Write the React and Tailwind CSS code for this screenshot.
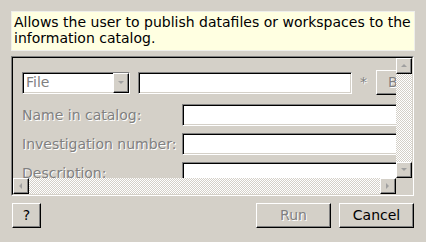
import React from "react";

const font = { fontFamily: '"DejaVu Sans", sans-serif' };

function Sunken({ className = "", children }) {
  return (
    <div
      className={
        "border border-t-[#808080] border-l-[#808080] border-b-white border-r-white shadow-[inset_1px_1px_0_#000,inset_-1px_-1px_0_#d4d0c8] " +
        className
      }
    >
      {children}
    </div>
  );
}

function Raised({ className = "", children }) {
  return (
    <div
      className={
        "border border-t-white border-l-white border-b-black border-r-black shadow-[inset_-1px_-1px_0_#808080] bg-[#d4d0c8] flex items-center justify-center " +
        className
      }
    >
      {children}
    </div>
  );
}

function Tri({ dir }) {
  const pts = {
    up: "1,5 4,2 7,5",
    down: "1,2 4,5 7,2",
    left: "5,1 2,4 5,7",
    right: "2,1 5,4 2,7",
  }[dir];
  return (
    <svg width="8" height="8" viewBox="0 0 8 8">
      <polygon points={pts} fill="#a0a0a0" />
    </svg>
  );
}

const dither =
  "bg-[repeating-conic-gradient(#ffffff_0_25%,#d4d0c8_0_50%)] bg-[length:2px_2px]";

const emboss = "text-[#808080] [text-shadow:1px_1px_0_#fff]";

export default function App() {
  return (
    <div
      className="w-[426px] h-[242px] bg-[#d4d0c8] flex flex-col pt-[11px] pl-[11px] text-[14px] overflow-hidden"
      style={font}
    >
      <div className="w-[404px] h-[40px] bg-[#ffffe1] border border-[#eeeeea] px-[2px] pt-[2px] leading-[16px] text-black">
        Allows the user to publish datafiles or workspaces to the information catalog.
      </div>

      <div className="mt-[5px] w-[403px] h-[140px] border border-t-[#808080] border-l-[#808080] border-b-white border-r-white">
        <div className="w-full h-full border border-t-black border-l-black border-b-[#d4d0c8] border-r-[#d4d0c8] grid grid-cols-[1fr_16px] grid-rows-[1fr_16px]">
          <div className="overflow-hidden relative">
            <div className="w-[520px] pl-[9px] pt-[12px] flex flex-col">
              <div className="flex items-center h-[25px]">
                <Sunken className="w-[108px] h-[22px] bg-white flex items-center">
                  <span className={"flex-1 pl-[3px] " + emboss}>File</span>
                  <Raised className="w-[16px] h-[20px] mr-0">
                    <Tri dir="down" />
                  </Raised>
                </Sunken>
                <Sunken className="ml-[8px] w-[214px] h-[22px] bg-white" />
                <span className={"ml-[8px] w-[14px] " + emboss}>*</span>
                <Raised className="ml-[2px] w-[75px] h-[25px]">
                  <span className={emboss}>Browse</span>
                </Raised>
              </div>
              <div className="flex flex-col gap-[7px] mt-[9px]">
                {["Name in catalog:", "Investigation number:", "Description:"].map((l) => (
                  <div key={l} className="flex items-center h-[22px]">
                    <span className={"w-[160px] whitespace-nowrap " + emboss}>{l}</span>
                    <Sunken className="w-[300px] h-[22px] bg-white" />
                  </div>
                ))}
              </div>
            </div>
          </div>
          <div className={"flex flex-col justify-between " + dither}>
            <Raised className="w-[16px] h-[16px]">
              <Tri dir="up" />
            </Raised>
            <Raised className="w-[16px] h-[16px]">
              <Tri dir="down" />
            </Raised>
          </div>
          <div className={"flex justify-between " + dither}>
            <Raised className="w-[16px] h-[16px]">
              <Tri dir="left" />
            </Raised>
            <Raised className="w-[16px] h-[16px]">
              <Tri dir="right" />
            </Raised>
          </div>
          <div className="bg-[#d4d0c8]" />
        </div>
      </div>

      <div className="flex items-center mt-[7px] w-[403px] pl-[1px]">
        <Raised className="w-[29px] h-[25px]">
          <span className="text-black">?</span>
        </Raised>
        <div className="flex-1" />
        <Raised className="w-[75px] h-[25px]">
          <span className={emboss}>Run</span>
        </Raised>
        <Raised className="ml-[8px] w-[75px] h-[25px]">
          <span className="text-black">Cancel</span>
        </Raised>
      </div>
    </div>
  );
}
